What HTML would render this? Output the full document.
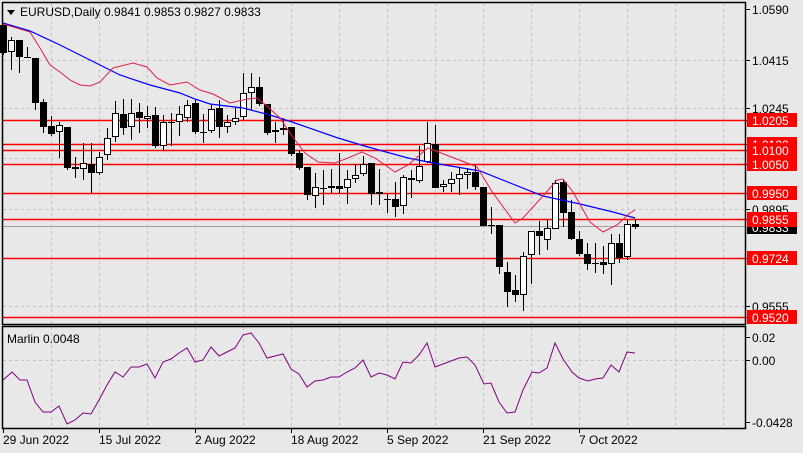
<!DOCTYPE html>
<html><head><meta charset="utf-8"><style>
html,body{margin:0;padding:0;background:#e8e8e8;width:803px;height:453px;overflow:hidden}
svg{display:block;font-family:"Liberation Sans",Tahoma,sans-serif;font-size:12px}
</style></head><body>
<svg id="s" width="803" height="453" viewBox="0 0 803 453" xmlns="http://www.w3.org/2000/svg">
<rect width="803" height="453" fill="#e8e8e8"/>
<g id="grid" stroke="#c4c4c4" stroke-dasharray="3,3" stroke-width="1"></g>
<g id="lines"></g>
<g id="cand"></g>
<polyline fill="none" stroke="#0000ff" stroke-width="1.2" points="3,23 30,31 60,45 90,60 120,75 150,85 180,93 195,99 210,104 243,108 270,115 292,122 338,138 368,147 408,158 433,163 480,171 543,196 580,204 613,212 635,218"/>
<polyline fill="none" stroke="#e0204a" stroke-width="1" points="3,24 30,32 40,48 50,65 60,72 70,80 80,85 90,86 100,82 113,68 133,63 147,67 157,78 170,85 187,82 200,90 213,94 230,103 247,99 257,98 267,106 280,118 292,136 305,153 318,162 335,163 348,158 362,152 375,158 395,172 408,165 428,148 467,163 477,167 493,193 515,223 523,218 543,196 557,180 563,179 573,192 590,222 603,232 617,225 630,213 635,210"/>
<polyline fill="none" stroke="#800080" stroke-width="1" points="3,380 12,372 20,380 27,380 35,402 43,412 51,412 59,406 67,424 75,420 83,413 91,414 99,400 107,385 115,372 123,377 131,367 139,367 147,364 155,378 163,362 171,359 179,353 187,348 195,362 203,360 211,347 219,356 227,352 235,348 243,335 251,333 259,343 267,358 275,356 283,354 291,369 299,374 307,387 315,381 323,380 331,377 339,377 347,372 355,368 363,360 371,377 379,373 387,375 395,379 403,362 411,363 419,355 427,343 435,367 443,364 451,361 459,358 467,357 475,365 484,384 491,383 499,402 507,413 515,412 523,390 532,372 539,373 547,368 555,343 563,359 572,372 579,378 588,381 595,379 603,378 611,365 619,372 627,352 635,353"/>
<rect x="2.5" y="2.5" width="743" height="322" fill="none" stroke="#000" stroke-width="1.5"/>
<rect x="2.5" y="326.5" width="743" height="102" fill="none" stroke="#000" stroke-width="1.5"/>
<path d="M7,10 L15,10 L11,15 Z" fill="#000"/>
<text x="20" y="16">EURUSD,Daily  0.9841 0.9853 0.9827 0.9833</text>
<text x="7" y="343">Marlin 0.0048</text>
<g id="axis"></g>
</svg>
<script>
var ns="http://www.w3.org/2000/svg";
function el(p,t,a,txt){var e=document.createElementNS(ns,t);for(var k in a)e.setAttribute(k,a[k]);if(txt)e.textContent=txt;document.getElementById(p).appendChild(e);return e;}
for(var x=51;x<746;x+=48){el('grid','line',{x1:x+.5,y1:3,x2:x+.5,y2:324});el('grid','line',{x1:x+.5,y1:327,x2:x+.5,y2:428});}
[60,108,158,209,258,306].forEach(function(y){el('grid','line',{x1:3,y1:y+.5,x2:745,y2:y+.5});});
el('grid','line',{x1:3,y1:360.5,x2:745,y2:360.5});
el('lines','line',{x1:3,y1:226.5,x2:745,y2:226.5,stroke:'#a0a0a0','stroke-width':1});
var hl=[[120,'1.0205'],[144,'1.0120'],[150,'1.0100'],[164,'1.0050'],[193,'0.9950'],[219,'0.9855'],[258,'0.9724'],[317,'0.9520']];
hl.forEach(function(h){el('lines','line',{x1:3,y1:h[0]+.5,x2:745,y2:h[0]+.5,stroke:'#ff0000','stroke-width':1.5});});
var C=[[3,25,53,25,55,'b'],[11,52,40,37,70,'w'],[19,40,57,40,73,'b'],[27,57,57,47,58,'d'],[35,58,103,58,110,'b'],[43,102,127,99,133,'b'],[51,126,134,116,136,'b'],[59,132,125,122,158,'w'],[67,127,168,127,170,'b'],[75,167,169,157,178,'b'],[83,169,163,143,180,'w'],[91,164,173,143,193,'b'],[99,173,157,152,175,'w'],[107,155,138,128,160,'w'],[115,137,113,101,142,'w'],[123,114,128,99,135,'b'],[131,127,113,99,140,'w'],[139,112,118,103,133,'b'],[147,119,116,106,128,'w'],[155,115,146,107,148,'b'],[163,146,122,115,151,'w'],[171,122,122,113,146,'d'],[179,122,114,106,136,'w'],[187,118,105,100,122,'w'],[195,103,132,100,134,'b'],[203,132,132,114,143,'d'],[211,131,109,105,133,'w'],[219,108,127,100,138,'b'],[227,127,122,115,133,'w'],[235,122,118,107,125,'w'],[243,117,93,73,120,'w'],[251,93,87,73,110,'w'],[259,87,104,77,106,'b'],[267,104,133,104,135,'b'],[275,132,130,122,143,'w'],[283,130,128,118,135,'w'],[291,127,154,127,156,'b'],[299,153,168,150,170,'b'],[307,167,195,167,200,'b'],[315,196,187,173,208,'w'],[323,188,188,170,205,'d'],[331,188,186,169,193,'w'],[339,186,189,153,194,'b'],[347,188,179,170,204,'w'],[355,179,175,164,183,'w'],[363,174,164,156,176,'w'],[371,163,194,163,205,'b'],[379,194,192,169,205,'w'],[387,199,199,194,213,'d'],[395,199,207,182,217,'b'],[403,206,177,175,214,'w'],[411,178,179,170,198,'b'],[419,181,166,146,183,'w'],[427,162,143,122,163,'w'],[435,144,188,125,188,'b'],[443,187,184,180,192,'w'],[451,184,179,172,192,'w'],[459,179,174,168,195,'w'],[467,175,172,168,189,'w'],[475,172,187,165,190,'b'],[483,187,226,187,226,'b'],[491,225,225,207,234,'d'],[499,225,267,225,274,'b'],[507,272,292,262,307,'b'],[515,290,295,275,302,'b'],[523,295,256,252,311,'w'],[531,255,231,231,284,'w'],[539,231,236,221,255,'b'],[547,240,228,220,250,'w'],[555,229,183,180,229,'w'],[563,182,213,180,227,'b'],[571,212,239,200,240,'b'],[579,239,254,231,256,'b'],[587,254,264,243,270,'b'],[595,263,263,243,273,'d'],[603,262,265,246,274,'b'],[611,264,243,234,285,'w'],[619,243,258,234,263,'b'],[627,257,224,220,260,'w'],[635,224,227,219,229,'b']];
C.forEach(function(c){var x=c[0],o=c[1],cl=c[2],h=c[3],l=c[4],t=c[5];
el('cand','line',{x1:x+.5,y1:h,x2:x+.5,y2:l,stroke:'#000','stroke-width':1});
var top=Math.min(o,cl),bh=Math.abs(o-cl);
if(t=='d'){el('cand','line',{x1:x-3,y1:o+.5,x2:x+4,y2:o+.5,stroke:'#000','stroke-width':1});}
else if(t=='b'){el('cand','rect',{x:x-3,y:top,width:7,height:Math.max(bh,2),fill:'#000'});}
else{el('cand','rect',{x:x-2.5,y:top+.5,width:6,height:Math.max(bh-1,1),fill:'#fff',stroke:'#000','stroke-width':1});}
});
var pl=[[9,'1.0590'],[60,'1.0415'],[108,'1.0245'],[209,'0.9895'],[306,'0.9555']];
pl.forEach(function(p){el('axis','line',{x1:746,y1:p[0]+.5,x2:750,y2:p[0]+.5,stroke:'#000'});el('axis','text',{x:752,y:p[0]+5,fill:'#000'},p[1]);});
el('axis','rect',{x:747,y:221,width:50,height:13,fill:'#000'});
el('axis','text',{x:752,y:232,fill:'#fff'},'0.9833');
hl.forEach(function(h){el('axis','line',{x1:746,y1:h[0]+.5,x2:750,y2:h[0]+.5,stroke:'#000'});el('axis','rect',{x:747,y:h[0]-7,width:50,height:14,fill:'#ff0000'});el('axis','text',{x:752,y:h[0]+5,fill:'#fff'},h[1]);});
el('axis','rect',{x:747,y:226,width:50,height:1,fill:'#ff0000'});
[[337,'0.02'],[360,'0.00'],[422,'-0.0428']].forEach(function(p){el('axis','line',{x1:746,y1:p[0]+.5,x2:750,y2:p[0]+.5,stroke:'#000'});el('axis','text',{x:752,y:p[0]+5,fill:'#000'},p[1]);});
[[3,'29 Jun 2022'],[99,'15 Jul 2022'],[195,'2 Aug 2022'],[291,'18 Aug 2022'],[387,'5 Sep 2022'],[483,'21 Sep 2022'],[579,'7 Oct 2022']].forEach(function(d){el('axis','line',{x1:d[0]+.5,y1:429,x2:d[0]+.5,y2:433,stroke:'#000'});el('axis','text',{x:d[0],y:444,fill:'#000'},d[1]);});
</script>
</body></html>
